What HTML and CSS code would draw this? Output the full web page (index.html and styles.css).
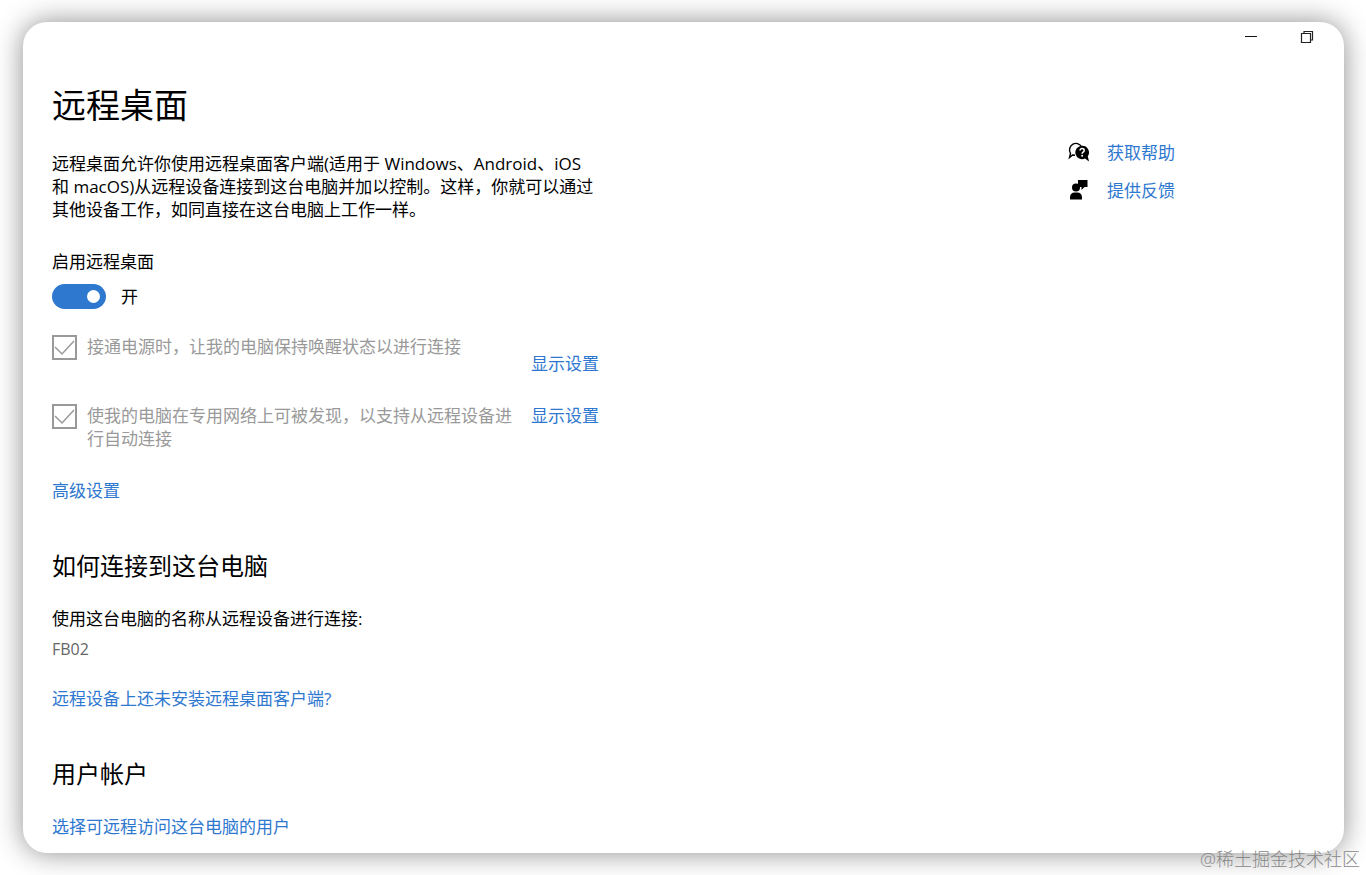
FILE: index.html
```html
<!DOCTYPE html>
<html lang="zh-CN">
<head>
    <meta charset="UTF-8">
    <meta name="viewport" content="width=device-width, initial-scale=1.0">
    <title>远程桌面</title>
    <link rel="stylesheet" href="styles.css">
</head>
<body>
    <div class="window">
        <header class="titlebar">
            <button class="win-btn" type="button" aria-label="最小化">
                <svg width="14" height="14" viewBox="0 0 14 14"><path d="M1 6.500h12" stroke="#111" fill="none"/></svg>
            </button>
            <button class="win-btn" type="button" aria-label="还原">
                <svg width="14" height="14" viewBox="0 0 14 14"><path d="M1.500 3.500h9v9h-9zM4 3.500V1.500h8.500v8.500H10.500" stroke="#222" stroke-width="1.200" fill="none"/></svg>
            </button>
        </header>

        <div class="content">
            <main class="settings">
                <h1>远程桌面</h1>
                <p class="intro">远程桌面允许你使用远程桌面客户端(适用于 Windows、Android、iOS 和 macOS)从远程设备连接到这台电脑并加以控制。这样，你就可以通过其他设备工作，如同直接在这台电脑上工作一样。</p>

                <label class="switch-label" for="enable">启用远程桌面</label>
                <div class="switch-row">
                    <input class="switch" id="enable" type="checkbox" role="switch" checked>
                    <span>开</span>
                </div>

                <div class="option option-low">
                    <span class="check">
                        <input id="awake" type="checkbox" checked disabled>
                        <svg viewBox="0 0 25 25"><path d="M3 12l7 7L22 6"/></svg>
                    </span>
                    <label for="awake">接通电源时，让我的电脑保持唤醒状态以进行连接</label>
                    <a href="#">显示设置</a>
                </div>
                <div class="option">
                    <span class="check">
                        <input id="discover" type="checkbox" checked disabled>
                        <svg viewBox="0 0 25 25"><path d="M3 12l7 7L22 6"/></svg>
                    </span>
                    <label for="discover">使我的电脑在专用网络上可被发现，以支持从远程设备进行自动连接</label>
                    <a href="#">显示设置</a>
                </div>
                <a class="advanced" href="#">高级设置</a>

                <section>
                    <h2>如何连接到这台电脑</h2>
                    <p>使用这台电脑的名称从远程设备进行连接:</p>
                    <p class="pc-name">FB02</p>
                    <a href="#">远程设备上还未安装远程桌面客户端?</a>
                </section>

                <section>
                    <h2>用户帐户</h2>
                    <a href="#">选择可远程访问这台电脑的用户</a>
                </section>
            </main>

            <aside class="help">
                <a href="#">
                    <svg width="22" height="22" viewBox="0 0 22 22">
                        <path d="M7 13.300l-2.500-.3-3 2.500 1-4.200A6.200 6.200 0 1 1 13.500 4.500" fill="none" stroke="#000" stroke-width="1.400"/>
                        <path d="M14 3.700a6.700 6.700 0 1 0 3 12.700l4 3-1.200-5.200A6.700 6.700 0 0 0 14 3.700z" fill="#000"/>
                        <path d="M12 8.500c0-2.700 4.200-2.600 4.200 0 0 1.600-2.100 1.600-2.100 3.200" fill="none" stroke="#fff" stroke-width="1.500"/>
                        <circle cx="14.100" cy="13.700" r="1" fill="#fff"/>
                    </svg>
                    <span>获取帮助</span>
                </a>
                <a href="#">
                    <svg width="22" height="22" viewBox="0 0 22 22">
                        <path d="M10 0h9.500v7h-3L13.500 10V7H10z"/>
                        <circle cx="8" cy="7.500" r="4"/>
                        <path d="M2 19.500V17a4.500 4.500 0 0 1 4.500-4.500h3A4.500 4.500 0 0 1 14 17v2.500z"/>
                    </svg>
                    <span>提供反馈</span>
                </a>
            </aside>
        </div>
    </div>
    <div class="watermark">@稀土掘金技术社区</div>
</body>
</html>
```
FILE: styles.css
```css
* {
    box-sizing: border-box;
}
body {
    margin: 0;
    padding: 22px 22px 22px 23px;
    min-height: 100vh;
    display: flex;
    position: relative;
    background: #fff;
    color: #000;
    font-family: "Open Sans", "Noto Sans CJK SC", sans-serif;
    font-size: 17px;
    line-height: 23px;
}
h1, h2, p {
    margin: 0;
    font-weight: normal;
}
a {
    color: #2f78d0;
    text-decoration: none;
}
.window {
    flex: 1;
    background: #fff;
    border-radius: 24px;
    box-shadow: 0 0 28px rgba(0, 0, 0, 0.45);
}
.titlebar {
    display: flex;
    justify-content: flex-end;
    height: 30px;
    padding-right: 9px;
}
.win-btn {
    width: 56px;
    padding: 0;
    border: none;
    background: none;
    display: grid;
    place-items: center;
}
.content {
    display: flex;
    justify-content: space-between;
    padding: 30px 30px 14px 29px;
}
.settings {
    width: 548px;
}
h1 {
    font-size: 34px;
    line-height: 46px;
    margin-bottom: 24px;
}
.intro {
    margin-bottom: 29px;
}
.switch-label {
    display: block;
    margin-bottom: 11px;
}
.switch-row {
    display: flex;
    align-items: center;
    gap: 15px;
    margin-bottom: 26px;
}
.switch {
    appearance: none;
    display: flex;
    align-items: center;
    justify-content: flex-end;
    width: 54px;
    height: 25px;
    margin: 0;
    padding-right: 6px;
    border-radius: 13px;
    background: #2f78d0;
}
.switch::before {
    content: "";
    width: 13px;
    height: 13px;
    border-radius: 50%;
    background: #fff;
}

/* checkbox, text, link */
.option {
    display: grid;
    grid-template-columns: 25px 1fr 69px;
    column-gap: 10px;
    margin-bottom: 29px;
    color: #999;
}
.option a {
    align-self: start;
}
.option-low a {
    margin-top: 17px;
}
.check {
    display: grid;
    height: 25px;
}
.check input,
.check svg {
    grid-area: 1 / 1;
    width: 25px;
    height: 25px;
    margin: 0;
}
.check input {
    appearance: none;
    border: 2px solid #999;
}
.check path {
    fill: none;
    stroke: #999;
    stroke-width: 1.5;
}
.advanced {
    display: block;
}
section {
    margin-top: 47px;
}
h2 {
    font-size: 24px;
    line-height: 34px;
    margin-bottom: 24px;
}
.pc-name {
    margin: 8px 0 26px;
    color: #666;
    font-size: 16px;
}
section a {
    display: block;
}

.help {
    width: 246px;
    padding-top: 59px;
}
.help a {
    display: flex;
    align-items: center;
    gap: 17px;
    margin-bottom: 15px;
}
.watermark {
    position: absolute;
    right: 6px;
    bottom: 4px;
    color: #888;
    font-size: 18px;
    font-weight: 300;
}
```
